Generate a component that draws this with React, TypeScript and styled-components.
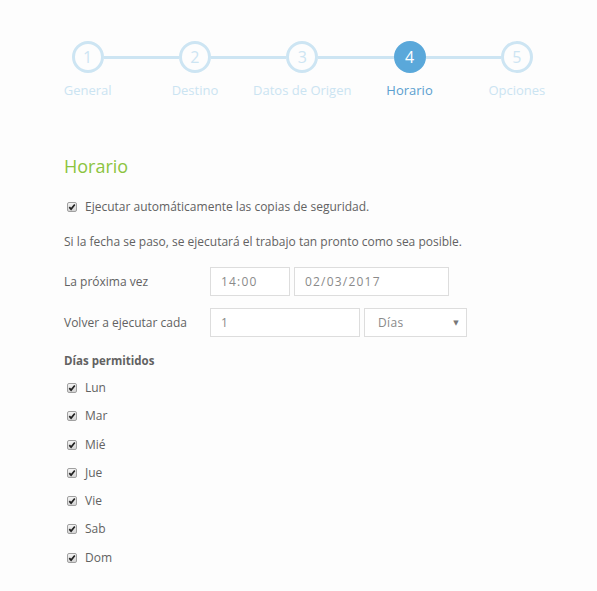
import styled, { createGlobalStyle } from "styled-components";

const GlobalStyle = createGlobalStyle`
  html, body {
    margin: 0;
    padding: 0;
    background: #fdfdfd;
  }
  body {
    font-family: "Open Sans", "DejaVu Sans", sans-serif;
    color: #626262;
  }
`;

const Page = styled.div`
  width: 597px;
  min-height: 591px;
  box-sizing: border-box;
  padding-top: 41px;
`;

const Stepper = styled.div`
  display: grid;
  grid-template-columns: repeat(5, 107.3px);
  margin-left: 34px;
`;

const Step = styled.div`
  position: relative;
  display: flex;
  flex-direction: column;
  align-items: center;

  &:not(:last-child)::after {
    content: "";
    position: absolute;
    top: 15px;
    left: calc(50% + 16px);
    width: calc(100% - 32px);
    height: 3px;
    background: #cde5f3;
  }
`;

const Circle = styled.div<{ $active?: boolean }>`
  width: 32px;
  height: 32px;
  box-sizing: border-box;
  border-radius: 50%;
  border: 3px solid ${({ $active }) => ($active ? "#5aa8da" : "#cde5f3")};
  background: ${({ $active }) => ($active ? "#5aa8da" : "#fdfdfd")};
  color: ${({ $active }) => ($active ? "#fff" : "#cde5f3")};
  display: flex;
  align-items: center;
  justify-content: center;
  font-size: 16px;
  line-height: 1;
`;

const StepLabel = styled.div<{ $active?: boolean }>`
  margin-top: 8px;
  font-size: 13px;
  white-space: nowrap;
  color: ${({ $active }) => ($active ? "#5b9fcf" : "#cbe4f2")};
`;

const Content = styled.div`
  padding: 0 64px;
`;

const Title = styled.h2`
  margin: 55px 0 0;
  font-size: 18px;
  font-weight: 400;
  color: #8cc43f;
  line-height: 24px;
`;

const CheckRow = styled.label`
  display: flex;
  align-items: center;
  gap: 8px;
  font-size: 12px;
  line-height: 18px;
  padding-left: 3px;
`;

const Box = styled.span`
  width: 10px;
  height: 10px;
  box-sizing: border-box;
  border: 1px solid #a0a0a0;
  border-radius: 2px;
  background: linear-gradient(#f4f4f4, #d4d4d4);
  display: flex;
  align-items: center;
  justify-content: center;
`;

const AutoRow = styled(CheckRow)`
  margin-top: 20px;
`;

const Note = styled.p`
  margin: 17px 0 0;
  font-size: 12px;
  line-height: 18px;
`;

const FieldRow = styled.div`
  display: flex;
  align-items: center;
  gap: 4px;
  margin-top: 12px;

  &:first-of-type {
    margin-top: 16px;
  }
`;

const FieldLabel = styled.div`
  width: 142px;
  font-size: 12px;
`;

const Input = styled.div<{ $w: number }>`
  width: ${({ $w }) => $w}px;
  height: 29px;
  box-sizing: border-box;
  border: 1px solid #ddd;
  background: #fff;
  display: flex;
  align-items: center;
  padding-left: 10px;
  font-size: 12px;
  color: #8a8a8a;
  letter-spacing: 1.2px;
`;

const Select = styled(Input)`
  justify-content: space-between;
  padding-left: 13px;
  padding-right: 7px;
  letter-spacing: 0.4px;
`;

const Caret = styled.span`
  font-size: 7px;
  color: #777;
`;

const SubTitle = styled.div`
  margin-top: 15px;
  font-size: 11.5px;
  font-weight: 700;
  line-height: 18px;
`;

const DayList = styled.div`
  display: flex;
  flex-direction: column;
  gap: 10.3px;
  margin-top: 9px;
`;

function Check() {
  return (
    <Box>
      <svg width="8" height="8" viewBox="0 0 8 8">
        <path d="M1.3 4.1 L3.1 6.1 L6.8 1.5" fill="none" stroke="#222" strokeWidth="1.7" />
      </svg>
    </Box>
  );
}

const steps = ["General", "Destino", "Datos de Origen", "Horario", "Opciones"];
const days = ["Lun", "Mar", "Mié", "Jue", "Vie", "Sab", "Dom"];

export default function App() {
  return (
    <Page>
      <GlobalStyle />
      <Stepper>
        {steps.map((s, i) => (
          <Step key={s}>
            <Circle $active={i === 3}>{i + 1}</Circle>
            <StepLabel $active={i === 3}>{s}</StepLabel>
          </Step>
        ))}
      </Stepper>
      <Content>
        <Title>Horario</Title>
        <AutoRow>
          <Check />
          Ejecutar automáticamente las copias de seguridad.
        </AutoRow>
        <Note>Si la fecha se paso, se ejecutará el trabajo tan pronto como sea posible.</Note>
        <FieldRow>
          <FieldLabel>La próxima vez</FieldLabel>
          <Input $w={80}>14:00</Input>
          <Input $w={155}>02/03/2017</Input>
        </FieldRow>
        <FieldRow>
          <FieldLabel>Volver a ejecutar cada</FieldLabel>
          <Input $w={150}>1</Input>
          <Select $w={103}>
            Días
            <Caret>▼</Caret>
          </Select>
        </FieldRow>
        <SubTitle>Días permitidos</SubTitle>
        <DayList>
          {days.map((d) => (
            <CheckRow key={d}>
              <Check />
              {d}
            </CheckRow>
          ))}
        </DayList>
      </Content>
    </Page>
  );
}
